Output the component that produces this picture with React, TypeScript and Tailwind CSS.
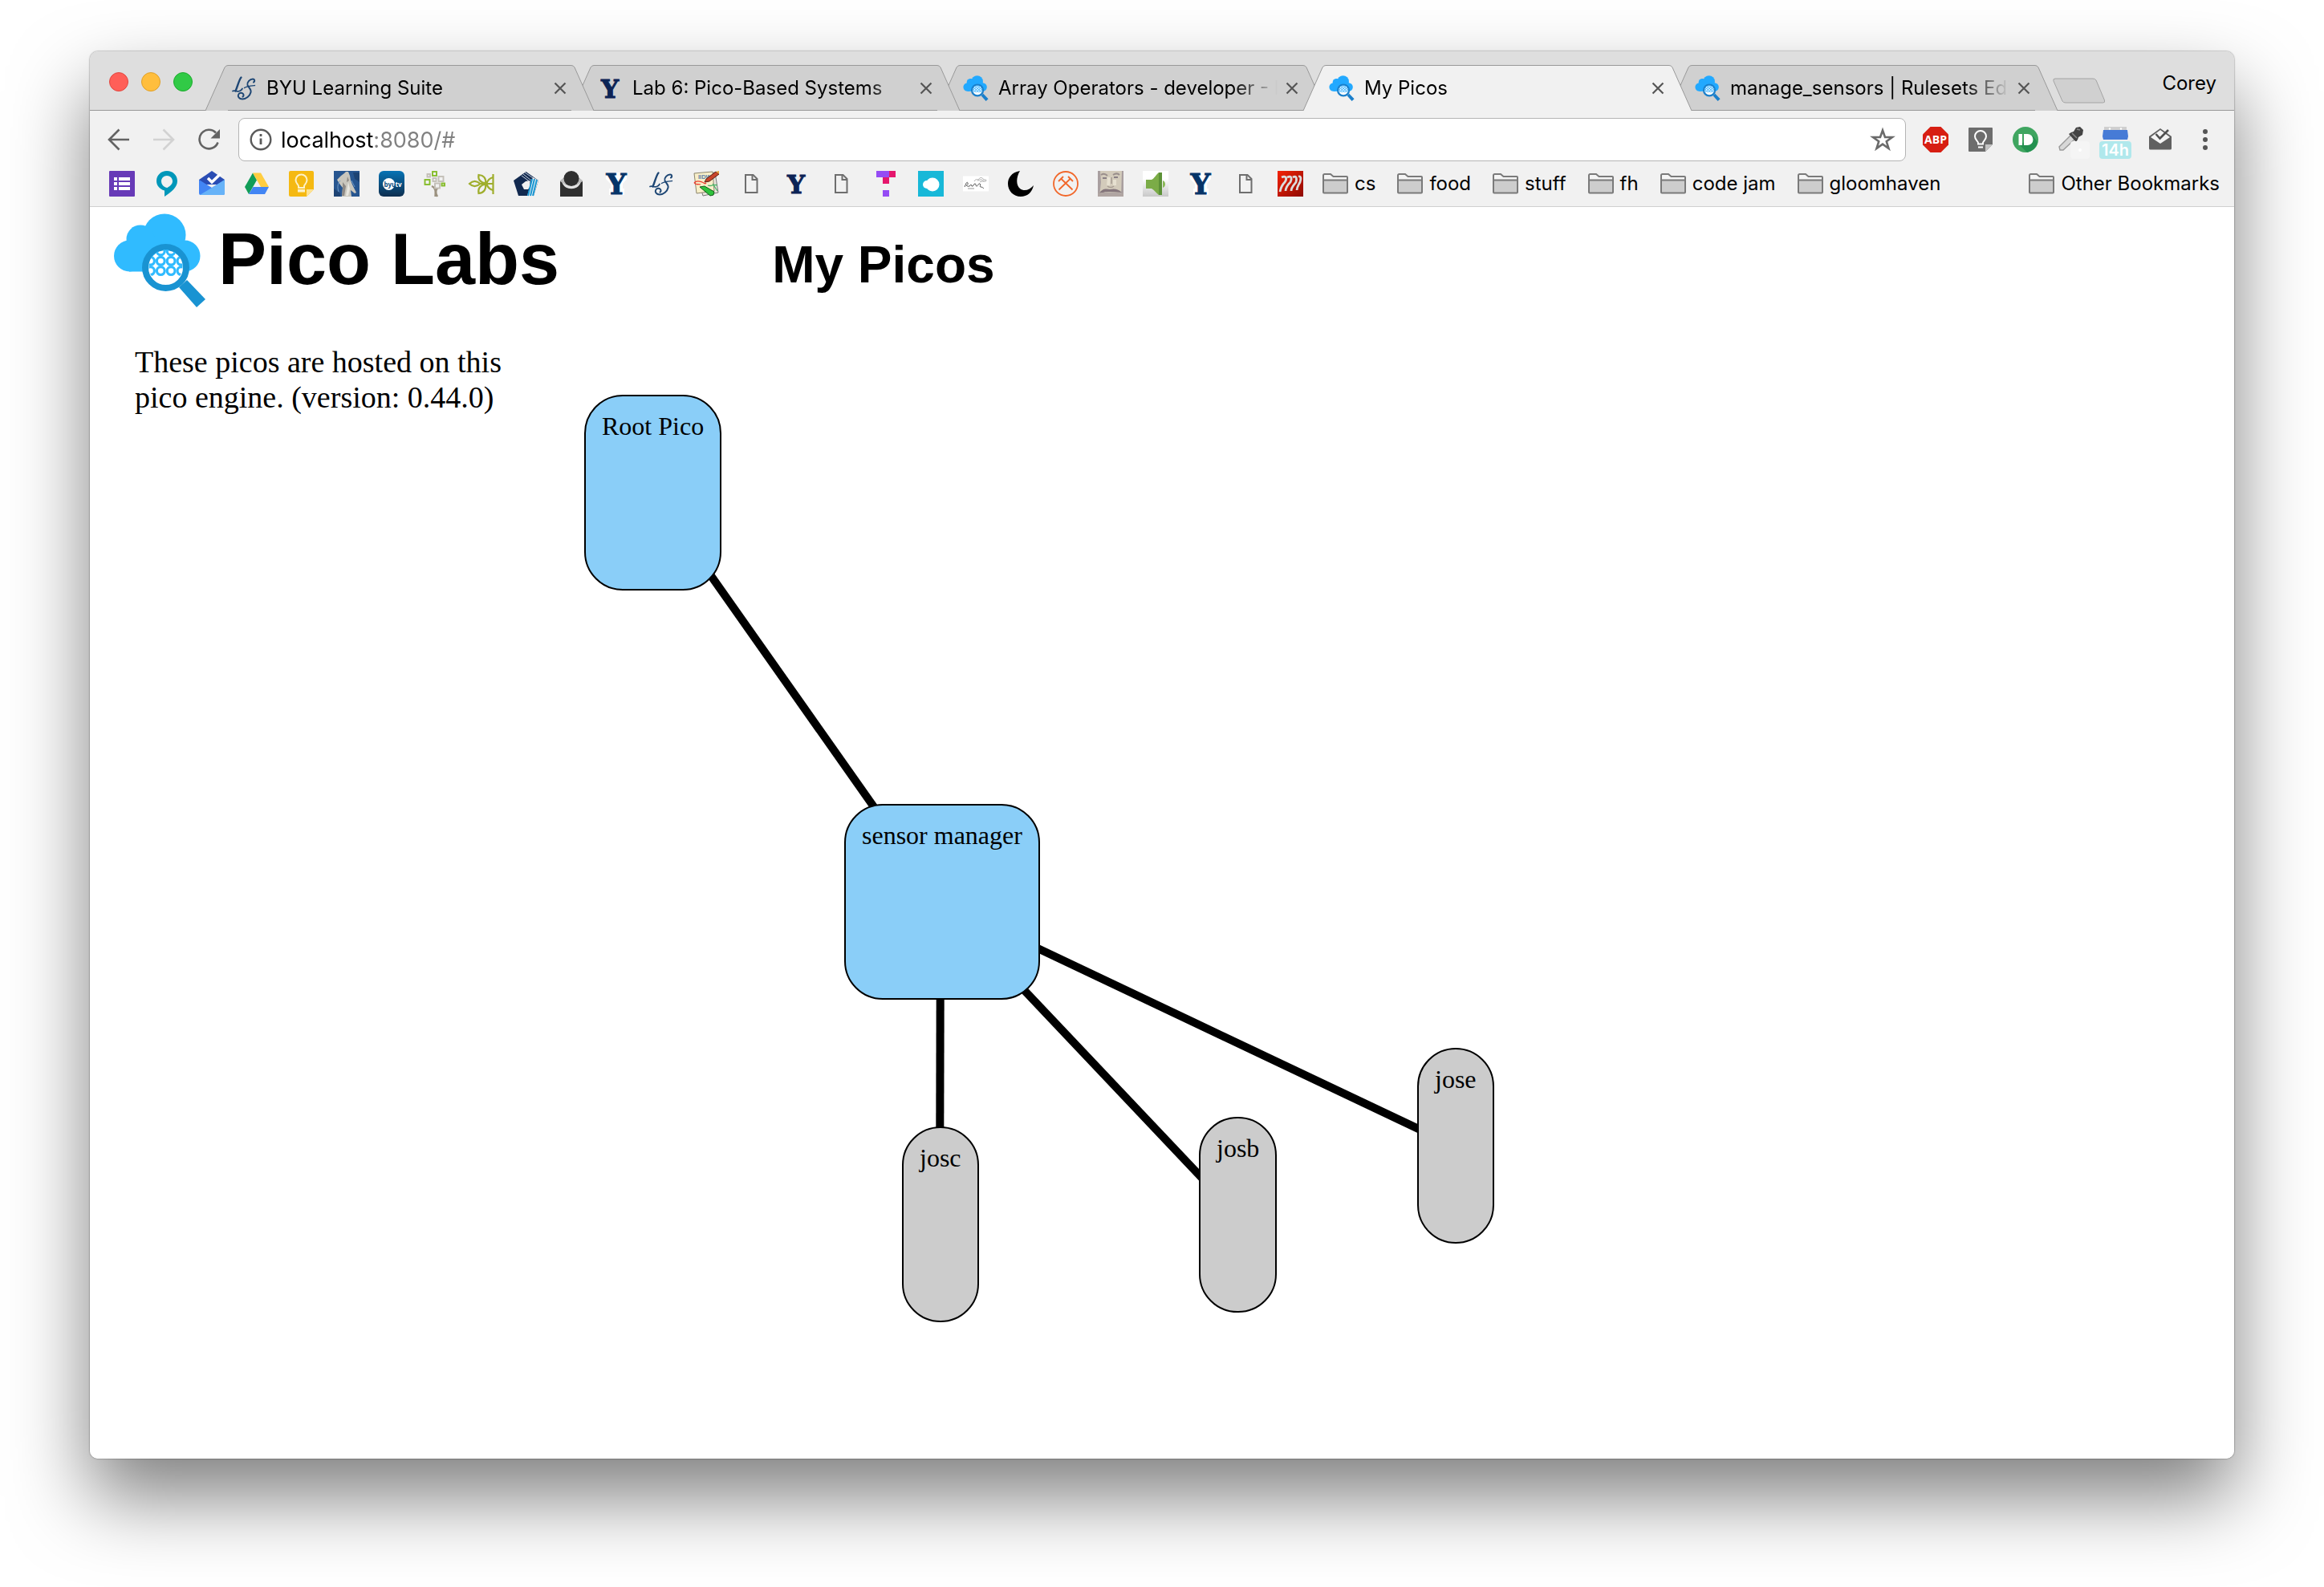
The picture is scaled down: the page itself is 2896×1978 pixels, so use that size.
import React from "react";

type IconProps = { className?: string };

function Svg({ className = "size-8", children, box = "0 0 32 32" }: { className?: string; children: React.ReactNode; box?: string }) {
  return (
    <svg viewBox={box} className={className + " block shrink-0 overflow-visible"} fill="none" aria-hidden="true">
      {children}
    </svg>
  );
}

/* ---------- logos ---------- */

function PicoLogo({ className, cloud, ring, id }: { className: string; cloud: string; ring: string; id: string }) {
  const rings: [number, number][] = [];
  for (let r = 0; r < 3; r++) for (let c = 0; c < 4; c++) rings.push([45.5 + c * 12.8, 47 + r * 12.3]);
  return (
    <Svg className={className} box="0 0 114 117">
      <g fill={cloud}>
        <circle cx="63" cy="27" r="26.5" />
        <circle cx="33" cy="32" r="17.5" />
        <circle cx="19.5" cy="53" r="19.5" />
        <circle cx="88" cy="53" r="19.5" />
        <rect x="19" y="30" width="69" height="42.5" />
      </g>
      <path d="M81 92 91 83 114 107 103 117Z" fill={ring} />
      <circle cx="64.5" cy="67.5" r="25.5" fill="#fff" stroke={ring} strokeWidth="8" />
      <clipPath id={id}>
        <path d="M43.500 62a21.500 21.500 0 0 1 42 0v8a21.500 21.500 0 0 1-4 9H47.500a21.500 21.500 0 0 1-4-9Z" />
      </clipPath>
      <g clipPath={`url(#${id})`} stroke={cloud} strokeWidth="3.200">
        {rings.map(([x, y]) => (
          <circle key={`${x}-${y}`} cx={x} cy={y} r="4.900" />
        ))}
      </g>
    </Svg>
  );
}

const PicoFavicon = ({ id }: { id: string }) => <PicoLogo className="size-8" cloud="#22a9ff" ring="#1a7fcb" id={id} />;

const LearningSuite = ({ className }: IconProps) => (
  <Svg className={className}>
    <g stroke="#1d4674" strokeLinecap="round" strokeLinejoin="round">
      <path d="M12.500 2.500C10 5 8 14 5.500 19.500" strokeWidth="2.400" />
      <path d="M2 19.500c2.500-1.500 5 1.500 8.500 0 2-.8 3-2 3.500-3" strokeWidth="1.700" />
      <path d="M28 8.500c2-1 1.500-4-1-4-3.500 0-7.500 4-6.500 7.500 1 3 5 5 4 9-1 4.500-6 8.500-10.500 8.500-4 0-6-3-5-5.500 1-2.700 4.500-3 6-1 1 1.500.5 3-.5 3.500" strokeWidth="2" />
      <path d="M16.500 15.500c2-2 8-2.500 13-3" strokeWidth="1.400" />
    </g>
  </Svg>
);

function YLogo({ color, outline, size }: { color: string; outline: boolean; size: number }) {
  return (
    <Svg>
      {outline && <path d="M3 2h26v8l-5 6v6h2v8H7v-8h2v-6l-6-6z" fill="#fff" />}
      <text
        x="16"
        y={outline ? 29 : 28}
        textAnchor="middle"
        fontFamily="DejaVu Serif"
        fontWeight="700"
        fontSize={size}
        fill={color}
        stroke={color}
        strokeWidth="1"
      >
        Y
      </text>
    </Svg>
  );
}

/* ---------- bookmark icons ---------- */

const FormsList = () => (
  <Svg>
    <rect width="32" height="32" rx="1" fill="#673ab7" />
    <path d="M6 8h4v4H6zM12 8h14v4H12zM6 14h4v4H6zM12 14h14v4H12zM6 20h4v4H6zM12 20h14v4H12z" fill="#fff" />
  </Svg>
);
const TealPin = () => (
  <Svg>
    <path d="M16 0C8.500 0 3 5.500 3 12.500 3 18 6.500 22.500 13 24.500V32c9-6 16-11.500 16-19.500C29 5.500 23.500 0 16 0Zm.500 21C12 20.500 9 17 9 12.800 9 9 12 6 16 6s7 3 7 6.800c0 3.700-2.500 5.700-6.500 8.200Z" fill="#0097b9" />
  </Svg>
);
const InboxMail = () => (
  <Svg>
    <path d="M0 11 16 0l16 11v6H0z" fill="#2a4db4" />
    <path d="M0 11 16 21 32 11v17a2 2 0 0 1-2 2H2a2 2 0 0 1-2-2z" fill="#4285f4" />
    <path d="M1 30 16 21 32 11v17a2 2 0 0 1-2 2z" fill="#67b3f8" />
    <path d="m11 9 5 5L27 3.500" stroke="#fff" strokeWidth="3.500" />
  </Svg>
);
const Drive = () => (
  <Svg>
    <path d="M11 2.500 1 20l5 9L16 11.500z" fill="#119d58" />
    <path d="M11 2.500h10L31 20H21z" fill="#ffcd40" />
    <path d="M11.500 20H31l-5 9H6z" fill="#4285f4" />
  </Svg>
);
const Keep = () => (
  <Svg>
    <path d="M2 0h27a2 2 0 0 1 2 2v21l-9 9H2a2 2 0 0 1-2-2V2a2 2 0 0 1 2-2z" fill="#f5b912" />
    <path d="M31 23h-9v9z" fill="#fde293" />
    <path d="M12 19c0-2-3.500-3.500-3.500-7.500a7 7 0 0 1 14 0c0 4-3.500 5.500-3.500 7.500v2h-7zM12 24h7v1.500h-7z" stroke="#fdf1c7" strokeWidth="2" />
  </Svg>
);
const Statue = () => (
  <Svg>
    <rect width="32" height="32" fill="#27558f" />
    <path d="M0 22 8 28v4H0zM24 2h8v12l-6-4z" fill="#1d4373" />
    <path d="M15 1h3l2 5 1 6 2 5 5 10-2 1-5-4 1 8H10l1-11-4-5-3-5 5-5 4-3z" fill="#c9c6bd" />
    <path d="m11 14 4 5-2 12h-3l1-10zM17 7l2 5-3 2z" fill="#8f8a86" />
    <path d="m18 14 2 8-2 9h-3z" fill="#e8e6df" />
    <path d="M8 12c-3 3-4 8-2 14M22 12l4 8" stroke="#6f9ac8" strokeWidth="1" />
  </Svg>
);
const ByuTv = () => (
  <Svg>
    <defs>
      <linearGradient id="tvbg" x1="0" y1="0" x2="0" y2="1">
        <stop offset="0" stopColor="#0573b5" />
        <stop offset="1" stopColor="#0e2e4f" />
      </linearGradient>
    </defs>
    <rect width="32" height="32" rx="6" fill="url(#tvbg)" />
    <circle cx="12.500" cy="16.500" r="7.500" fill="#fff" />
    <text x="6.500" y="19.500" fontFamily="Open Sans" fontWeight="700" fontSize="8" fill="#0d4f82">byu</text>
    <text x="20.500" y="19.500" fontFamily="Open Sans" fontWeight="700" fontSize="8" fill="#fff">tv</text>
  </Svg>
);
const FamilyTree = () => (
  <Svg>
    <path d="M10 19c5 2 5 6 4.500 13M17 32c-3-5-3-9 2-12M14.500 24v-8" stroke="#9b917f" strokeWidth="2.400" />
    <g strokeWidth="1.900" fill="#f1f1f1">
      <rect x="11" y="1" width="5" height="5" stroke="#86bc2b" />
      <rect x="4.500" y="4" width="3.500" height="3.500" stroke="#c3bfb7" />
      <rect x="11.500" y="9" width="4" height="4" stroke="#c3bfb7" />
      <rect x="18.500" y="7" width="6" height="6" stroke="#c3bfb7" />
      <rect x="1.500" y="11" width="6" height="6" stroke="#86bc2b" />
      <rect x="14" y="15.500" width="6" height="6" stroke="#c3bfb7" />
      <rect x="22.500" y="15.500" width="3.500" height="3" stroke="#86bc2b" />
    </g>
  </Svg>
);
const Leaf = () => (
  <Svg>
    <g stroke="#9fae2d" strokeWidth="2.200">
      <path d="M1 16c4-4 9-4 13.500 0-4.500 4-9.500 4-13.500 0zM30.500 4v25M14 16h17" />
      <path d="M21 15.500C14 14 11.500 10 12.500 5 19 5.500 22 9.500 21 15.500zM21 16.500c-7 1.500-9.500 6-8.500 11.500 6.500-.5 9.500-5 8.500-11.500zM22.500 16c1-4.500 3.500-7 8-8M22.500 16c1 4.500 3.500 7 8 8" />
    </g>
  </Svg>
);
const Pentagon = () => (
  <Svg>
    <path d="M15.500 1 31 12 25 31H6L0 12z" fill="#12294f" />
    <path d="m15 13 5-1 1 7-3 4h-5l-3-6z" fill="#f1f1f1" />
    <path d="M10 6 21 14M12 4l10 8M14 2l12 8" stroke="#c8d3e0" strokeWidth="1" />
    <path d="M24 8 31 12 25 31H17z" fill="#f1f1f1" />
    <path d="M23 10 18 31M26 10 21 31M29 11 24 31" stroke="#1796d3" strokeWidth="2" />
  </Svg>
);
const Envelope = () => (
  <Svg>
    <path d="M2 13 8 9v5a8 8 0 0 0 16 0V9l6 4v19H2z" fill="#303030" />
    <path d="M4 11c0 15 24 15 24 0l-3-1c0 10-18 10-18 0z" fill="#e2e2e2" />
    <path d="M2 13v-1l5-4v4l3 6zM30 13v-1l-5-4v4l-3 6z" fill="#bdbdbd" />
    <circle cx="16" cy="9.500" r="9.500" fill="#303030" />
  </Svg>
);
const Papers = () => (
  <Svg>
    <path d="m4 5 23-3 4 25-19 4z" fill="#e9e6dd" stroke="#777" strokeWidth="1" />
    <path d="m1 3 23-2 2 24-22 3z" fill="#f7efc9" stroke="#8d866d" strokeWidth="1" />
    <text x="6" y="9.500" fontFamily="Liberation Sans" fontWeight="700" fontSize="7.500" fill="#5b7ea8">IIDW</text>
    <path d="M1 15c3-4 7-2 10-1s3 3 5 1M1 15c2 3 6 1 8 2" stroke="#ee3d2f" strokeWidth="1.300" />
    <path d="m14 14 2-4L28 1l4 3-12 9z" fill="#c8452b" stroke="#5b1d12" strokeWidth="1" />
    <path d="m28 1 4-1v4z" fill="#e8a23a" />
    <path d="m8 20 6-1 12 7-1 4-4 1z" fill="#2fc23c" stroke="#125c1a" strokeWidth="1" />
    <path d="M18 18c5 2 8-2 12 0M24 16l6 9" stroke="#4cb46a" strokeWidth="1.300" />
  </Svg>
);
const Doc = () => (
  <Svg>
    <path d="M9 5h9.500l5 5v17H9z" stroke="#6e6e6e" strokeWidth="2" />
    <path d="M17.500 5v6h6" stroke="#6e6e6e" strokeWidth="2" />
  </Svg>
);
const Blocks = () => (
  <Svg>
    <path d="M4 0h16v8H4zM12 24h8v8h-8z" fill="#954cf4" />
    <path d="M20 0h8v8h-8zM12 8h8v8h-8z" fill="#e5176d" />
  </Svg>
);
const CyanCloud = () => (
  <Svg>
    <rect width="32" height="32" fill="#18b8d8" />
    <circle cx="18" cy="17" r="8.500" fill="#fff" />
    <circle cx="11" cy="17" r="5" fill="#fff" />
  </Svg>
);
const Signature = () => (
  <Svg>
    <rect y="6.500" width="32" height="19" fill="#fff" />
    <path d="M2 20c2-5 3-7 4-5s-2 3-2 3 2 2 4 1 1-2 2-2 0 3 2 2 1-3 3-3 0 3 2 3 2-4 4-3-1 4 1 4 3 1 4 2" stroke="#555" strokeWidth="1" />
    <path d="M14 13c2-4 5-1 6-3s4-2 5 0 4 0 4 2-6 0-8 2M18 12c3 0 4-3 8 1" stroke="#aaa" strokeWidth="1" />
    <path d="M6 22h8" stroke="#999" strokeWidth="1" />
  </Svg>
);
const Moon = () => (
  <Svg>
    <path d="M15 0C4 2 0 9 0 16c0 9 7 16 16 16 8 0 14-5 16-14-5 6-12 8-17 4-5-4-5-14 0-22z" fill="#000" />
  </Svg>
);
const Pickaxes = () => (
  <Svg>
    <g stroke="#f1672a" strokeWidth="1.800">
      <circle cx="16" cy="16" r="15" />
      <path d="M10 9.500 24.500 23.500M22 9.500 7.500 23.500" />
      <path d="M7 13 13 7M25 13 19 7" />
    </g>
  </Svg>
);
const Portrait = () => (
  <Svg>
    <rect width="32" height="32" fill="#d3cbbb" />
    <path d="M0 0h3l1 14-2 18H0zM30 0h2v32h-3z" fill="#a99fa0" />
    <path d="M4 5c3-2 6-1 8 1M19 5c3-2 6-2 8 0" stroke="#9a8f8c" strokeWidth="2" />
    <path d="M6 9h5M20 8h5" stroke="#8a8085" strokeWidth="2" />
    <path d="M14 8l-1 10M21 11v7" stroke="#e6e0d0" strokeWidth="4" />
    <path d="M12 19c2 2 6 2 8 0M17 8v8" stroke="#a79c92" strokeWidth="1.500" />
    <path d="M2 28c3-6 8-6 13-5 5-1 10-1 15 4-5 0-9-1-15-1s-9 1-13 2z" fill="#85767c" />
    <path d="M0 28c8-2 22-2 32 0v4H0z" fill="#b0a5a2" />
  </Svg>
);
const Speaker = () => (
  <Svg>
    <defs>
      <linearGradient id="spbg" x1="0" y1="0" x2="0" y2="1">
        <stop offset=".3" stopColor="#fff" />
        <stop offset="1" stopColor="#c8c8c8" />
      </linearGradient>
    </defs>
    <rect width="32" height="32" fill="url(#spbg)" />
    <path d="M4 11h7c4-2 5-6 9-9h4v28h-4c-4-3-5-6-9-8H4z" fill="#7bac47" />
    <path d="M20 2h4v28h-4z" fill="#5c9137" />
    <path d="M25 12c4 1 4 8 0 9z" fill="#8ab857" />
  </Svg>
);
const RedStripes = () => (
  <Svg>
    <defs>
      <linearGradient id="rdbg" x1="0" y1="0" x2="1" y2="1">
        <stop offset="0" stopColor="#f42206" />
        <stop offset="1" stopColor="#8e0b02" />
      </linearGradient>
    </defs>
    <rect width="32" height="32" fill="url(#rdbg)" />
    <g stroke="#dcdcdc" strokeWidth="2.800">
      <path d="M5 8c6-3 7 2 4 6-3 3-5 7-6 12M12 8c6-3 6 2 4 6-3 3-6 6-6 11M19 8c5-3 5 2 4 6-2 3-6 6-6 11M26 7c4-1 3 4 2 7-2 4-4 6-4 10" />
    </g>
  </Svg>
);

const bookmarkIcons: { name: string; icon: React.ReactNode }[] = [
  { name: "Forms", icon: <FormsList /> },
  { name: "Pin", icon: <TealPin /> },
  { name: "Inbox", icon: <InboxMail /> },
  { name: "Drive", icon: <Drive /> },
  { name: "Keep", icon: <Keep /> },
  { name: "Statue", icon: <Statue /> },
  { name: "Television", icon: <ByuTv /> },
  { name: "Family tree", icon: <FamilyTree /> },
  { name: "Leaf", icon: <Leaf /> },
  { name: "Pentagon", icon: <Pentagon /> },
  { name: "Envelope", icon: <Envelope /> },
  { name: "University", icon: <YLogo color="#063468" outline size={35} /> },
  { name: "Learning Suite", icon: <LearningSuite /> },
  { name: "Workshop", icon: <Papers /> },
  { name: "Page", icon: <Doc /> },
  { name: "University labs", icon: <YLogo color="#0c2355" outline={false} size={31} /> },
  { name: "Page", icon: <Doc /> },
  { name: "Blocks", icon: <Blocks /> },
  { name: "Cloud", icon: <CyanCloud /> },
  { name: "Signature", icon: <Signature /> },
  { name: "Moon", icon: <Moon /> },
  { name: "Mining", icon: <Pickaxes /> },
  { name: "Portrait", icon: <Portrait /> },
  { name: "Speaker", icon: <Speaker /> },
  { name: "University home", icon: <YLogo color="#063468" outline size={35} /> },
  { name: "Page", icon: <Doc /> },
  { name: "Stripes", icon: <RedStripes /> },
];

const Folder = () => (
  <Svg>
    <path d="M1 27V5.500A1.500 1.500 0 0 1 2.500 4H10l3.500 3H30a1 1 0 0 1 1 1v19z" fill="#f5f5f5" />
    <path d="M1 11h30v15.500a1 1 0 0 1-1 1H2a1 1 0 0 1-1-1z" fill="#cdcdcd" />
    <path d="M1 26.500V5.500A1.500 1.500 0 0 1 2.500 4H10l3.500 3H30a1 1 0 0 1 1 1v18.500a1 1 0 0 1-1 1H2a1 1 0 0 1-1-1zM1 11.500h30" stroke="#7a7a7a" strokeWidth="2" />
  </Svg>
);

function FolderLink({ label }: { label: string }) {
  return (
    <a href="#" className="flex shrink-0 items-center gap-2 whitespace-nowrap">
      <Folder />
      <span>{label}</span>
    </a>
  );
}

/* ---------- tabs ---------- */

type TabData = { title: string; icon: React.ReactNode; active?: boolean; z: string };

const tabs: TabData[] = [
  { title: "BYU Learning Suite", icon: <LearningSuite />, z: "z-[5]" },
  { title: "Lab 6: Pico-Based Systems", icon: <YLogo color="#0c2355" outline={false} size={31} />, z: "z-[4]" },
  { title: "Array Operators - developer - Pico", icon: <PicoFavicon id="f1" />, z: "z-[3]" },
  { title: "My Picos", icon: <PicoFavicon id="f2" />, active: true, z: "z-[6]" },
  { title: "manage_sensors | Rulesets Editor", icon: <PicoFavicon id="f3" />, z: "z-[2]" },
];

function Tab({ tab, first }: { tab: TabData; first: boolean }) {
  const fill = tab.active ? "#f1f1f1" : "#d0d0d0";
  return (
    <div className={`relative flex h-[57px] w-[484px] min-w-0 shrink ${tab.z} ${first ? "" : "-ml-7"} ${tab.active ? "" : "border-b border-[#999999]"}`}>
      <svg viewBox="0 0 28 57" className="h-[57px] w-7 shrink-0" aria-hidden="true">
        <path d="M0 57 24 3Q25.500 .5 28 .5V57Z" fill={fill} />
        <path d="M0 57 24 3Q25.500 .5 28 .5" fill="none" stroke="#999999" />
      </svg>
      <div className={`flex min-w-0 grow items-center border-t border-[#999999] pl-1 ${tab.active ? "bg-[#f1f1f1]" : "bg-[#d0d0d0]"}`}>
        {tab.icon}
        <span className="ml-3 min-w-0 grow overflow-hidden whitespace-nowrap [mask-image:linear-gradient(to_right,black_calc(100%-56px),transparent)]">
          {tab.title}
        </span>
        <button type="button" aria-label={`Close ${tab.title}`} className="ml-1 flex size-7 shrink-0 items-center justify-center">
          <Svg className="size-4" box="0 0 16 16">
            <path d="M1.500 1.500l13 13m0-13l-13 13" stroke="#555" strokeWidth="2.200" />
          </Svg>
        </button>
      </div>
      <svg viewBox="0 0 28 57" className="h-[57px] w-7 shrink-0" aria-hidden="true">
        <path d="M28 57 4 3Q2.500 .5 0 .5V57Z" fill={fill} />
        <path d="M28 57 4 3Q2.500 .5 0 .5" fill="none" stroke="#999999" />
      </svg>
    </div>
  );
}

function TabStrip() {
  return (
    <div className="relative flex h-[74px] items-end rounded-t-[10px] border-b border-[#999999] bg-[#dedede] pr-[22px] pl-6">
      <div className="mr-4 flex shrink-0 gap-4 self-start pt-[26px]">
        <button type="button" aria-label="Close window" className="size-6 rounded-full border border-[#e2463f] bg-[#ff5f58]" />
        <button type="button" aria-label="Minimize window" className="size-6 rounded-full border border-[#e0a028] bg-[#ffbe3d]" />
        <button type="button" aria-label="Zoom window" className="size-6 rounded-full border border-[#1bac2c] bg-[#31ca46]" />
      </div>
      <div className="-mb-px flex min-w-0 text-2xl leading-8 text-black">
        {tabs.map((tab, i) => (
          <Tab key={tab.title} tab={tab} first={i === 0} />
        ))}
      </div>
      <button type="button" aria-label="New tab" className="-ml-1.5 shrink-0 pb-2">
        <Svg className="h-8 w-[66px]" box="0 0 66 32">
          <path d="M3 1H50q3 0 4 2L64.500 28q1 3-2 3H16q-3 0-4-2L1 4q-1-3 2-3Z" fill="#d0d0d0" stroke="#a4a4a4" />
        </Svg>
      </button>
      <button type="button" className="ml-auto shrink-0 self-start pt-6 text-2xl leading-8 text-black">
        Corey
      </button>
    </div>
  );
}

/* ---------- toolbar ---------- */

function IconButton({ label, children }: { label: string; children: React.ReactNode }) {
  return (
    <button type="button" aria-label={label} className="relative size-8 shrink-0">
      {children}
    </button>
  );
}

function Toolbar() {
  return (
    <div className="flex items-center gap-[21px] px-5 pt-[9px]">
      <div className="flex shrink-0 gap-6">
        <IconButton label="Back">
          <Svg>
            <path d="M29 16H5M16.500 3.500 4 16l12.500 12.500" stroke="#636363" strokeWidth="2.600" />
          </Svg>
        </IconButton>
        <IconButton label="Forward">
          <Svg>
            <path d="M3 16h24M15.500 3.500 28 16 15.500 28.500" stroke="#d2d2d2" strokeWidth="2.600" />
          </Svg>
        </IconButton>
        <IconButton label="Reload">
          <Svg>
            <path d="M25 7.500A11.800 11.800 0 1 0 27.500 19.500" stroke="#636363" strokeWidth="2.600" />
            <path d="M30 3v11.500H18.500z" fill="#636363" />
          </Svg>
        </IconButton>
      </div>
      <div className="flex h-[54px] min-w-0 grow items-center rounded-lg border border-[#b4b4b4] bg-white px-3">
        <Svg>
          <circle cx="15" cy="16" r="12.300" stroke="#5a5a5a" strokeWidth="2.400" />
          <path d="M15 9v3M15 14.500V22" stroke="#5a5a5a" strokeWidth="2.800" />
        </Svg>
        <input
          type="text"
          aria-label="Address"
          defaultValue="localhost:8080/#"
          className="ml-2 min-w-0 grow bg-[linear-gradient(to_right,#000_116px,#808080_116px)] bg-clip-text pt-0.5 text-[27px] leading-9 text-transparent outline-none"
        />
        <button type="button" aria-label="Bookmark this page" className="shrink-0">
          <Svg>
            <path d="M16 4.500 19 13h9l-7.200 5.300 2.700 8.700-7.500-5.400L8.500 27l2.700-8.700L4 13h9z" stroke="#6a6a6a" strokeWidth="2.600" />
          </Svg>
        </button>
      </div>
      <div className="flex shrink-0 gap-6">
        <IconButton label="Adblock Plus">
          <Svg>
            <path d="M9.500 0h13L32 9.500v13L22.500 32h-13L0 22.500v-13z" fill="#d71e12" />
            <text x="16" y="21" textAnchor="middle" fontFamily="Open Sans" fontWeight="700" fontSize="14" fill="#fff">ABP</text>
          </Svg>
        </IconButton>
        <IconButton label="Keep">
          <Svg>
            <path d="M2 1h28a1 1 0 0 1 1 1v20l-9 9H2a1 1 0 0 1-1-1V2a1 1 0 0 1 1-1z" fill="#6d6d6d" />
            <path d="M31 22h-9v9z" fill="#c4c4c4" />
            <path d="M13 20c0-2-4-3.500-4-8a7 7 0 0 1 14 0c0 4.500-4 6-4 8v1.500h-6zM13 25.500h6" stroke="#fff" strokeWidth="2" />
          </Svg>
        </IconButton>
        <IconButton label="Pushbullet">
          <Svg>
            <circle cx="16" cy="16" r="16" fill="#3fa560" />
            <path d="m25 11 6 8a16 16 0 0 1-13 13l-9-9z" fill="#239150" />
            <path d="M7.500 9H12v14H7.500zM14 9h4.500a7 7 0 0 1 0 14H14z" fill="#fff" />
          </Svg>
        </IconButton>
        <IconButton label="Color picker">
          <Svg>
            <path d="m3 29-1-4L17 10l5 5L7 29z" fill="#d8d8d8" stroke="#9a9a9a" strokeWidth="1.400" />
            <path d="m14 9 3-2 3-1 3-5 5-1 4 4-1 6-5 3-1 3-2 3z" fill="#444" />
            <path d="m18 8 6 6M24 3l4 1" stroke="#8a8a8a" strokeWidth="1.500" />
          </Svg>
          <span className="absolute top-[18px] left-4 flex h-[22px] w-6 items-center justify-center rounded bg-[#f5f5f5]">
            <span className="size-1 rounded-full bg-white" />
          </span>
        </IconButton>
        <IconButton label="Calendar">
          <Svg>
            <path d="M2 0h28v5H2z" fill="#cfcfcf" />
            <circle cx="9" cy="2.500" r="1.200" fill="#fff" />
            <circle cx="23" cy="2.500" r="1.200" fill="#fff" />
            <path d="M1 4h30l1 8-1 4H1l-1-4z" fill="#467bd6" />
          </Svg>
          <span className="absolute top-[18px] -left-1 h-[22px] w-10 rounded-sm bg-[#b0e8ec] text-center text-xl leading-[22px] font-semibold text-white">
            14h
          </span>
        </IconButton>
        <IconButton label="Inbox">
          <Svg>
            <path d="M2 12 16 2l14 10v15a1.500 1.500 0 0 1-1.500 1.500h-25A1.500 1.500 0 0 1 2 27z" fill="#606060" />
            <path d="M4 13 16 4l12 9-12 8z" fill="#f4f4f4" />
            <path d="m10.500 9 5 5.500L26 4" stroke="#505050" strokeWidth="2.600" />
          </Svg>
        </IconButton>
        <IconButton label="Menu">
          <Svg>
            <g fill="#555">
              <circle cx="16" cy="6" r="3" />
              <circle cx="16" cy="16" r="3" />
              <circle cx="16" cy="26" r="3" />
            </g>
          </Svg>
        </IconButton>
      </div>
    </div>
  );
}

function BookmarksBar() {
  return (
    <nav className="flex h-14 items-center gap-6 pr-[18px] pl-6 text-2xl leading-8 text-black">
      {bookmarkIcons.map((b, i) => (
        <a key={i} href="#" aria-label={b.name} className="shrink-0">
          {b.icon}
        </a>
      ))}
      <div className="flex shrink-0 gap-[27px]">
        {["cs", "food", "stuff", "fh", "code jam", "gloomhaven"].map((f) => (
          <FolderLink key={f} label={f} />
        ))}
      </div>
      <div className="ml-auto">
        <FolderLink label="Other Bookmarks" />
      </div>
    </nav>
  );
}

/* ---------- page ---------- */

const BLUE = "bg-[#8acef8]";
const GRAY = "bg-[#cccccc]";

const nodes = [
  { label: "Root Pico", x: 616, y: 234, tone: BLUE },
  { label: "sensor manager", x: 940, y: 744, tone: BLUE },
  { label: "josc", x: 1012, y: 1146, tone: GRAY },
  { label: "josb", x: 1382, y: 1134, tone: GRAY },
  { label: "jose", x: 1654, y: 1048, tone: GRAY },
];

const links = [
  [701, 356, 1061, 867],
  [1060, 866, 1059, 1268],
  [1061, 867, 1430, 1257],
  [1061, 867, 1702, 1171],
];

function PicoDiagram() {
  return (
    <div className="absolute inset-0">
      <svg className="absolute inset-0 size-full" aria-hidden="true">
        {links.map(([x1, y1, x2, y2]) => (
          <line key={`${x2}-${y2}`} x1={x1} y1={y1} x2={x2} y2={y2} stroke="#000" strokeWidth="10" />
        ))}
      </svg>
      {nodes.map((n) => (
        <div
          key={n.label}
          className={`absolute h-[244px] rounded-[48px] border-2 border-black p-5 text-[32px] leading-[34px] whitespace-nowrap ${n.tone}`}
          style={{ left: n.x, top: n.y }}
        >
          {n.label}
        </div>
      ))}
    </div>
  );
}

export default function App() {
  return (
    <div className="flex min-h-screen flex-col bg-white px-28 pt-16 pb-40 font-[Inter,sans-serif]">
      <div className="flex grow flex-col rounded-[10px] shadow-[0_0_2px_rgba(0,0,0,0.6),0_48px_96px_rgba(0,0,0,0.5)]">
        <TabStrip />
        <div className="border-b border-[#cfcfcf] bg-[#f1f1f1]">
          <Toolbar />
          <BookmarksBar />
        </div>
        <main className="relative grow rounded-b-[10px] bg-white font-['Liberation_Serif',serif] text-black">
          <PicoDiagram />
          <header className="relative flex items-start pl-[30px] font-['Liberation_Sans',sans-serif] font-bold">
            <a href="#" className="flex items-start gap-4 pt-2">
              <PicoLogo className="h-[117px] w-[114px]" cloud="#30bbff" ring="#1993d2" id="brand" />
              <span className="text-[90px] leading-[114px] whitespace-nowrap">Pico Labs</span>
            </a>
            <h1 className="ml-[265px] pt-9 text-[64px] leading-[72px] font-bold whitespace-nowrap">My Picos</h1>
          </header>
          <p className="relative mt-[46px] ml-14 w-[480px] text-[38px] leading-[44px]">
            These picos are hosted on this pico engine. (version: 0.44.0)
          </p>
        </main>
      </div>
    </div>
  );
}
